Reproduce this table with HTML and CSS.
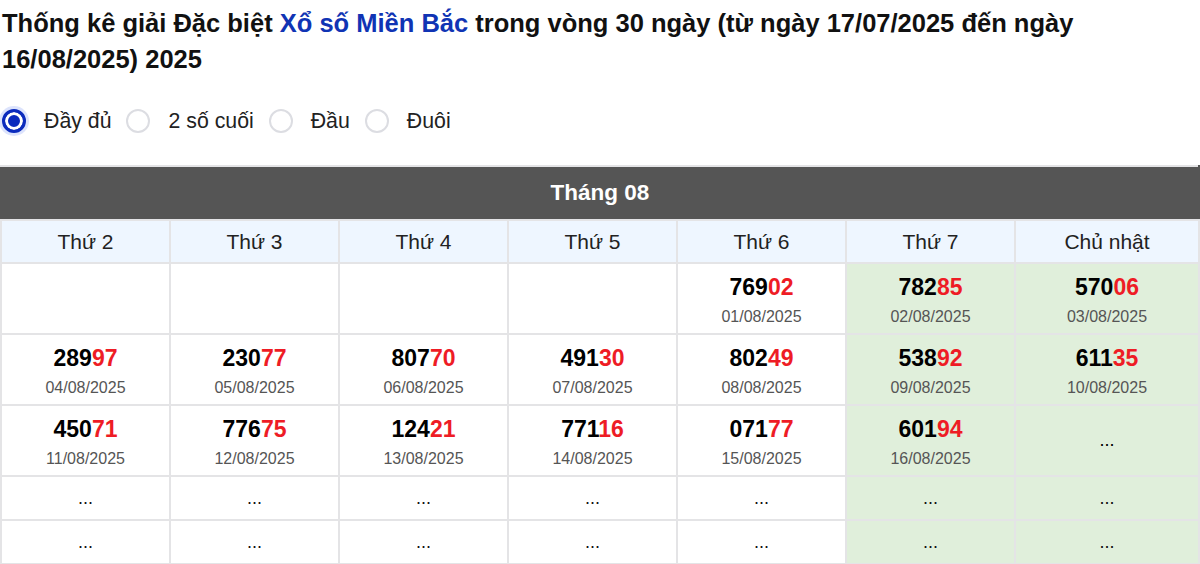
FILE: index.html
```html
<!DOCTYPE html>
<html lang="vi">
<head>
<meta charset="utf-8">
<title>Thống kê giải Đặc biệt</title>
<link rel="stylesheet" href="styles.css">
</head>
<body>
<div class="page">
  <h2 class="title">Thống kê giải Đặc biệt <a class="link" href="#">Xổ số Miền Bắc</a> trong vòng 30 ngày (từ ngày 17/07/2025 đến ngày 16/08/2025) 2025</h2>
  <div class="options">
    <label class="opt"><span class="radio checked"></span><span class="opt-text">Đầy đủ</span></label>
    <label class="opt"><span class="radio"></span><span class="opt-text">2 số cuối</span></label>
    <label class="opt"><span class="radio"></span><span class="opt-text">Đầu</span></label>
    <label class="opt"><span class="radio"></span><span class="opt-text">Đuôi</span></label>
  </div>
  <table class="cal">
    <colgroup>
      <col class="c"><col class="c"><col class="c"><col class="c"><col class="c"><col class="c"><col class="c-last">
    </colgroup>
    <thead>
      <tr><th class="month" colspan="7">Tháng 08</th></tr>
      <tr class="days">
        <th>Thứ 2</th><th>Thứ 3</th><th>Thứ 4</th><th>Thứ 5</th><th>Thứ 6</th><th>Thứ 7</th><th>Chủ nhật</th>
      </tr>
    </thead>
    <tbody>
      <tr class="data">
        <td></td><td></td><td></td><td></td>
        <td><div class="num">769<span class="red">02</span></div><div class="date">01/08/2025</div></td>
        <td class="wk"><div class="num">782<span class="red">85</span></div><div class="date">02/08/2025</div></td>
        <td class="wk"><div class="num">570<span class="red">06</span></div><div class="date">03/08/2025</div></td>
      </tr>
      <tr class="data">
        <td><div class="num">289<span class="red">97</span></div><div class="date">04/08/2025</div></td>
        <td><div class="num">230<span class="red">77</span></div><div class="date">05/08/2025</div></td>
        <td><div class="num">807<span class="red">70</span></div><div class="date">06/08/2025</div></td>
        <td><div class="num">491<span class="red">30</span></div><div class="date">07/08/2025</div></td>
        <td><div class="num">802<span class="red">49</span></div><div class="date">08/08/2025</div></td>
        <td class="wk"><div class="num">538<span class="red">92</span></div><div class="date">09/08/2025</div></td>
        <td class="wk"><div class="num">611<span class="red">35</span></div><div class="date">10/08/2025</div></td>
      </tr>
      <tr class="data">
        <td><div class="num">450<span class="red">71</span></div><div class="date">11/08/2025</div></td>
        <td><div class="num">776<span class="red">75</span></div><div class="date">12/08/2025</div></td>
        <td><div class="num">124<span class="red">21</span></div><div class="date">13/08/2025</div></td>
        <td><div class="num">771<span class="red">16</span></div><div class="date">14/08/2025</div></td>
        <td><div class="num">071<span class="red">77</span></div><div class="date">15/08/2025</div></td>
        <td class="wk"><div class="num">601<span class="red">94</span></div><div class="date">16/08/2025</div></td>
        <td class="wk dots">...</td>
      </tr>
      <tr class="empty">
        <td>...</td><td>...</td><td>...</td><td>...</td><td>...</td><td class="wk">...</td><td class="wk">...</td>
      </tr>
      <tr class="empty">
        <td>...</td><td>...</td><td>...</td><td>...</td><td>...</td><td class="wk">...</td><td class="wk">...</td>
      </tr>
    </tbody>
  </table>
</div>
</body>
</html>
```

FILE: styles.css
```css
html, body {
  margin: 0;
  padding: 0;
  background: #fff;
}
body {
  font-family: "Liberation Sans", Arial, sans-serif;
  color: #000;
}
.page {
  width: 1200px;
}
.title {
  margin: 0;
  padding: 5px 20px 0 2px;
  font-size: 25.5px;
  font-weight: bold;
  line-height: 36px;
  color: #111;
}
.link {
  color: #1034b4;
  text-decoration: none;
}
.options {
  display: flex;
  align-items: center;
  margin-top: 28px;
  height: 32px;
  padding-left: 2px;
}
.opt {
  display: flex;
  align-items: center;
}
.radio {
  box-sizing: border-box;
  width: 24px;
  height: 24px;
  border-radius: 50%;
  border: 2px solid #dcdde2;
  background: #fff;
  margin-right: 18px;
}
.radio.checked {
  border: 3px solid #0b2bbd;
  background: #0b2bbd;
  box-shadow: inset 0 0 0 3px #fff, 0 0 0 3px rgba(60, 100, 240, 0.18);
}
.opt-text {
  font-size: 21.3px;
  color: #222;
  margin-right: 15px;
}
.cal {
  margin-top: 28px;
  width: 1200px;
  border-collapse: collapse;
  table-layout: fixed;
}
.cal col.c {
  width: 169px;
}
.cal th, .cal td {
  border: 2px solid #e4e4e6;
  text-align: center;
  padding: 0;
}
.cal .month {
  background: #555555;
  color: #fff;
  font-size: 22.5px;
  font-weight: bold;
  height: 52px;
  border-color: #555555 #555555 #e4e4e6 #555555;
  border-top: 2px solid #e4e4e6;
}
.days th {
  background: #eef6ff;
  font-weight: normal;
  font-size: 21px;
  color: #222;
  height: 41px;
}
.data td {
  height: 60px;
  vertical-align: top;
  padding-top: 9px;
}
.cal td.wk {
  background: #e0efdb;
}
.num {
  font-size: 23px;
  font-weight: bold;
  line-height: 28px;
  color: #000;
}
.red {
  color: #ee1c25;
}
.date {
  margin-top: 5px;
  font-size: 16px;
  line-height: 22px;
  color: #555;
}
.data td.dots {
  vertical-align: middle;
  padding-top: 0;
  font-size: 18px;
}
.empty td {
  height: 42px;
  font-size: 18px;
  color: #111;
  vertical-align: middle;
}
```
